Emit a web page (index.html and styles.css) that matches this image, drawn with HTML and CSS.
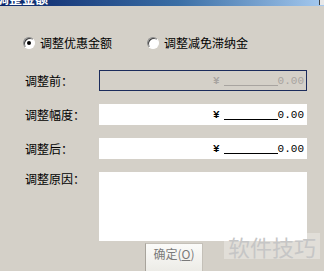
FILE: index.html
```html
<!DOCTYPE html>
<html lang="zh-CN">
<head>
  <meta charset="UTF-8" />
  <link rel="stylesheet" href="styles.css">
  <title>调整金额</title>
</head>
<body>
  <div class="window">
    <div class="titlebar"><span class="title">调整金额</span><span class="close"></span></div>

    <div class="content">
      <div class="radios">
        <label class="radio"><span class="dot checked"></span>调整优惠金额</label>
        <label class="radio"><span class="dot"></span>调整减免滞纳金</label>
      </div>

      <div class="form">
        <div class="label">调整前：</div>
        <div class="field disabled"><span class="yen">¥</span><span class="line"></span><span class="num">0.00</span></div>

        <div class="label">调整幅度：</div>
        <div class="field"><span class="yen">¥</span><span class="line"></span><span class="num">0.00</span></div>

        <div class="label">调整后：</div>
        <div class="field"><span class="yen">¥</span><span class="line"></span><span class="num">0.00</span></div>

        <div class="label top">调整原因：</div>
        <div class="memo"></div>
      </div>

      <div class="actions">
        <button class="btn" disabled>确定(<u>O</u>)</button>
      </div>
    </div>

    <div class="watermark">软件技巧</div>
  </div>
</body>
</html>
```

FILE: styles.css
```css
body {
  margin: 0;
  background: #d4d0c8;
  font-family: "Noto Sans CJK SC", sans-serif;
  font-size: 12px;
  color: #000;
}
.window {
  position: relative;
  width: 324px;
  height: 271px;
  overflow: hidden;
}
.titlebar {
  height: 6px;
  overflow: hidden;
  background: linear-gradient(to right, #0a246a, #3a6ea5 55%, #a6caf0);
  position: relative;
}
.title {
  display: block;
  margin-top: -10px;
  margin-left: -4px;
  color: #fff;
  font-weight: bold;
  font-size: 13px;
  line-height: 16px;
}
.close {
  position: absolute;
  right: 0;
  top: 0;
  width: 4px;
  height: 5px;
  background: #e8e8e8;
  border-left: 1px solid #404040;
}
.content {
  padding: 30px 17px 0 23px;
}
.radios {
  display: flex;
  height: 14px;
  align-items: center;
}
.radio {
  display: flex;
  align-items: center;
  line-height: 14px;
}
.radio + .radio {
  margin-left: 35px;
}
.dot {
  width: 10px;
  height: 10px;
  border-radius: 50%;
  border: 1px solid #8a8a8a;
  border-right-color: #fff;
  border-bottom-color: #fff;
  background: #fff;
  box-shadow: inset 1px 1px 0 #404040;
  margin-right: 5px;
  position: relative;
}
.dot.checked::after {
  content: "";
  position: absolute;
  left: 3px;
  top: 3px;
  width: 4px;
  height: 4px;
  border-radius: 50%;
  background: #000;
}
.form {
  display: grid;
  grid-template-columns: 74px 208px;
  row-gap: 13px;
  margin-top: 20px;
  padding-left: 2px;
  align-items: center;
}
.label {
  line-height: 14px;
}
.label.top {
  align-self: start;
}
.field {
  height: 21px;
  box-sizing: border-box;
  background: #fff;
  display: flex;
  align-items: center;
  justify-content: flex-end;
  padding-right: 3px;
}
.field.disabled {
  background: #d4d0c8;
  border: 1px solid #1c2c5c;
  color: #a8a4a0;
  padding-right: 2px;
}
.yen {
  font-family: "Liberation Mono", monospace;
  font-weight: bold;
  font-size: 11px;
  margin-right: 4px;
}
.line {
  width: 54px;
  height: 10px;
  border-bottom: 1px solid #000;
}
.disabled .line {
  border-bottom-color: #a8a4a0;
}
.num {
  font-family: "Liberation Mono", monospace;
  font-size: 11px;
}
.memo {
  height: 69px;
  background: #fff;
}
.actions {
  padding-left: 122px;
  margin-top: 2px;
}
.btn {
  width: 58px;
  height: 30px;
  border: 1px solid #c4c0b8;
  border-left-color: #a8a49c;
  background: linear-gradient(#fbfbf9, #ecebe6);
  font-family: "Noto Sans CJK SC", sans-serif;
  font-size: 12px;
  color: #7a7a7a;
  padding: 0 0 10px;
}
.watermark {
  position: absolute;
  left: 224px;
  top: 233px;
  padding: 0 4px;
  font-size: 22px;
  line-height: 26px;
  color: #c6c6c6;
  background: rgba(255, 255, 255, 0.3);
}
```
